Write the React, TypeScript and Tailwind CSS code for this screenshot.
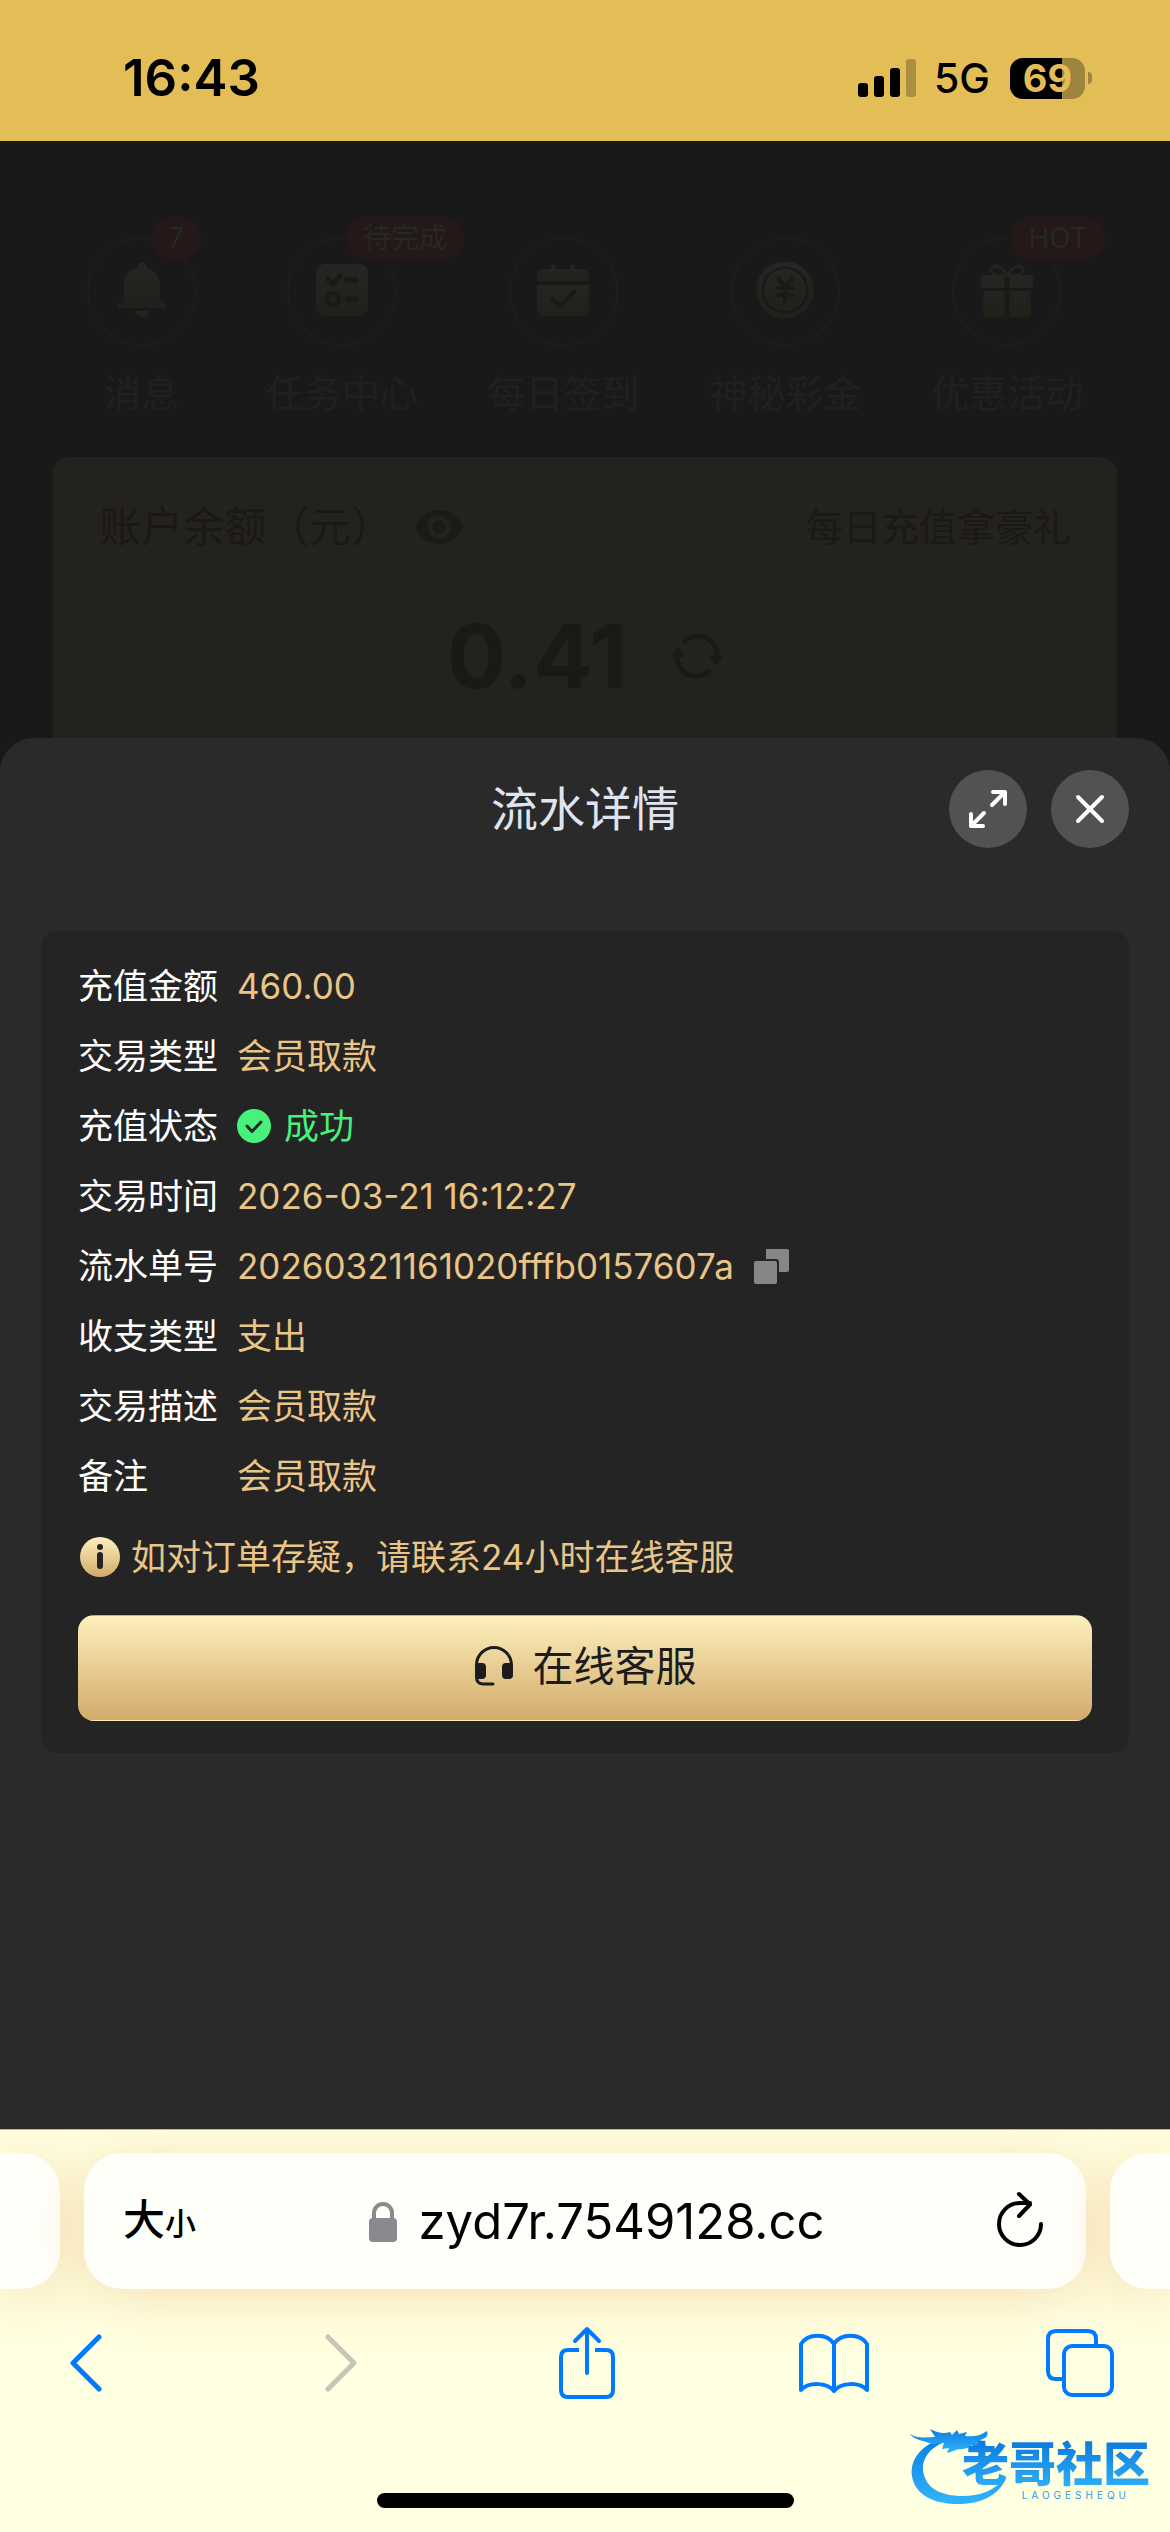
import React from 'react';

const SANS = "font-['Inter','Noto_Sans_CJK_SC',sans-serif]";

/* ---------- status bar ---------- */

function StatusBar() {
  return (
    <header className="flex h-[141px] shrink-0 items-end justify-between bg-[#e3be57] pr-[78px] pb-[38px] pl-[123px] text-black">
      <time className="text-[51px] leading-[50px] font-semibold">16:43</time>
      <div className="flex items-center">
        <svg className="h-[38px] w-[58px]" viewBox="0 0 58 38" aria-label="signal">
          <rect x="0" y="24" width="10" height="14" rx="3" />
          <rect x="16" y="17" width="10" height="21" rx="3" />
          <rect x="32" y="9" width="10" height="29" rx="3" />
          <rect x="48" y="0" width="10" height="38" rx="3" opacity="0.25" />
        </svg>
        <span className="ml-[18px] text-[41px] leading-[50px] font-medium">5G</span>
        <div className="relative ml-[20px] flex h-[41px] w-[75px] items-center justify-center rounded-[13px] bg-[#9e853d]">
          <div className="absolute inset-y-0 left-0 w-[69%] rounded-l-[13px] bg-black" />
          <span className="relative text-[38px] leading-[46px] font-bold text-[#e3be57]">69</span>
        </div>
        <div className="ml-[3px] h-[12px] w-[4px] rounded-r-full bg-[#9e853d]" />
      </div>
    </header>
  );
}

/* ---------- dimmed page behind the sheet ---------- */

function FadeDefs({ id }: { id: string }) {
  return (
    <defs>
      <linearGradient id={id} x1="0" y1="0" x2="0" y2="1">
        <stop offset="0" stopColor="#252523" />
        <stop offset="1" stopColor="#21201a" />
      </linearGradient>
    </defs>
  );
}

function BellIcon() {
  return (
    <svg className="size-[58px]" viewBox="0 0 58 58">
      <FadeDefs id="bell" />
      <g fill="url(#bell)">
        <path d="M29 1c2.300 0 4 1.800 4 4v1.500c8 1.800 14 8.500 14 17.500v13c0 4 2 5.500 6 6v4H5v-4c4-.500 6-2 6-6V24c0-9 6-15.700 14-17.500V5c0-2.200 1.700-4 4-4z" />
        <path d="M22.500 50h13c0 4-3 7-6.500 7s-6.500-3-6.500-7z" />
      </g>
    </svg>
  );
}

function TasksIcon() {
  return (
    <svg className="size-[58px]" viewBox="0 0 58 58">
      <FadeDefs id="tasks" />
      <rect x="3" y="3" width="52" height="52" rx="9" fill="url(#tasks)" />
      <g fill="none" stroke="#191919" strokeWidth="5" strokeLinecap="round" strokeLinejoin="round">
        <path d="M15 18l5 5 7-8M34 19h9M34 38h9" />
        <circle cx="20" cy="38" r="6" strokeWidth="4" />
      </g>
    </svg>
  );
}

function CalendarIcon() {
  return (
    <svg className="size-[58px]" viewBox="0 0 58 58">
      <FadeDefs id="calendar" />
      <g fill="url(#calendar)">
        <path d="M3 20v-5c0-4 3-7 7-7h7V6a2.200 2.200 0 014.500 0v2h15V6a2.200 2.200 0 014.500 0v2h7c4 0 7 3 7 7v5z" />
        <path d="M3 24h52v24c0 4-3 7-7 7H10c-4 0-7-3-7-7z" />
      </g>
      <path d="M18 38l8 7 14-14" fill="none" stroke="#191919" strokeWidth="4" strokeLinecap="round" strokeLinejoin="round" />
    </svg>
  );
}

function CoinIcon() {
  return (
    <svg className="size-[58px]" viewBox="0 0 58 58">
      <FadeDefs id="coin" />
      <circle cx="29" cy="29" r="26" fill="none" stroke="url(#coin)" strokeWidth="5" />
      <circle cx="29" cy="29" r="21" fill="url(#coin)" />
      <path d="M22 17l7 9 7-9M22 27h14M22 34h14M29 27v14" fill="none" stroke="#191919" strokeWidth="4" strokeLinecap="round" strokeLinejoin="round" />
    </svg>
  );
}

function GiftIcon() {
  return (
    <svg className="size-[58px]" viewBox="0 0 58 58">
      <FadeDefs id="gift" />
      <path d="M29 15C24 4 13 2 13 9c0 5 8 6 16 6zM29 15C34 4 45 2 45 9c0 5-8 6-16 6z" fill="none" stroke="#242320" strokeWidth="3" />
      <g fill="url(#gift)">
        <path d="M3 16a2 2 0 012-2h21.500v13H3zM31.500 14H53a2 2 0 012 2v11H31.500zM5.500 30h21v26h-19a2 2 0 01-2-2zM31.500 30h21v24a2 2 0 01-2 2h-19z" />
      </g>
    </svg>
  );
}

const shortcuts = [
  { label: '消息', icon: <BellIcon />, badge: '7', badgeLeft: 'left-[62px]' },
  { label: '任务中心', icon: <TasksIcon />, badge: '待完成', badgeLeft: 'left-[57px]' },
  { label: '每日签到', icon: <CalendarIcon /> },
  { label: '神秘彩金', icon: <CoinIcon /> },
  { label: '优惠活动', icon: <GiftIcon />, badge: 'HOT', badgeLeft: 'left-[57px]' },
];

function Shortcuts() {
  return (
    <nav className="flex justify-between px-[87px] pt-[96px]">
      {shortcuts.map((s) => (
        <a key={s.label} href="#" className="flex min-w-[109px] flex-col items-center gap-[23px]">
          <span className="relative flex size-[109px] items-center justify-center rounded-full border-2 border-[#1e1d1b] pb-[3px]">
            {s.icon}
            {s.badge && (
              <span
                className={`absolute -top-[23px] ${s.badgeLeft} h-[44px] rounded-full bg-[#241818] px-[17px] text-[28px] leading-[44px] whitespace-nowrap text-[#262727]`}
              >
                {s.badge}
              </span>
            )}
          </span>
          <span className="text-[38px] leading-[48px] text-[#202020]">{s.label}</span>
        </a>
      ))}
    </nav>
  );
}

function BalanceCard() {
  return (
    <section className="mx-[53px] mt-[40px] h-[320px] rounded-[16px] bg-[#24221e] px-[46px] pt-[40px] text-[#1a1917]">
      <div className="flex h-[60px] items-center justify-between">
        <div className="flex items-center">
          <span className="text-[42px] leading-[60px]">账户余额（元）</span>
          <svg className="ml-[22px] h-[34px] w-[48px]" viewBox="0 0 48 34">
            <path d="M24 0C13 0 4 7 0 17c4 10 13 17 24 17s20-7 24-17C44 7 35 0 24 0z" fill="#1a1a19" />
            <circle cx="24" cy="17" r="9" fill="none" stroke="#24221e" strokeWidth="5" />
          </svg>
        </div>
        <span className="text-[38px] leading-[60px]">每日充值拿豪礼</span>
      </div>
      <div className="mt-[50px] flex items-center justify-center gap-[44px]">
        <strong className="text-[88px] leading-[98px] font-bold">0.41</strong>
        <svg className="h-[44px] w-[52px]" viewBox="0 0 52 44">
          <g fill="none" stroke="#1a1917" strokeWidth="5" strokeLinecap="round">
            <path d="M14 7a19 19 0 0132 15" />
            <path d="M38 37A19 19 0 016 22" />
          </g>
          <path d="M38 21h14l-7 11zM0 23h14L7 12z" fill="#1a1917" />
        </svg>
      </div>
    </section>
  );
}

/* ---------- bottom sheet ---------- */

function CheckBadge() {
  return (
    <svg className="mr-[13px] size-[34px]" viewBox="0 0 34 34">
      <circle cx="17" cy="17" r="17" fill="#46f27c" />
      <path d="M10 17l5 5.500 9-9.500" fill="none" stroke="#242424" strokeWidth="3" strokeLinecap="round" strokeLinejoin="round" />
    </svg>
  );
}

function CopyIcon() {
  return (
    <svg className="size-[35px]" viewBox="0 0 35 35" fill="#868686">
      <path d="M13 0h20a2 2 0 012 2v19a2 2 0 01-2 2h-8V13a3 3 0 00-3-3H12V1a1 1 0 011-1z" />
      <rect x="0" y="12" width="23" height="23" rx="2" />
    </svg>
  );
}

type Row = { label: string; value: React.ReactNode; tone?: string; copy?: boolean };

const rows: Row[] = [
  { label: '充值金额', value: '460.00' },
  { label: '交易类型', value: '会员取款' },
  { label: '充值状态', value: <><CheckBadge />成功</>, tone: 'text-[#46f27c]' },
  { label: '交易时间', value: '2026-03-21 16:12:27' },
  { label: '流水单号', value: '20260321161020fffb0157607a', copy: true },
  { label: '收支类型', value: '支出' },
  { label: '交易描述', value: '会员取款' },
  { label: '备注', value: '会员取款' },
];

function DetailSheet() {
  return (
    <section role="dialog" aria-labelledby="sheet-title" className="relative -mt-[39px] flex-1 rounded-t-[34px] bg-[#2a2a2a] px-[41px] pt-[32px]">
      <div className="relative flex h-[78px] items-center justify-center">
        <h1 id="sheet-title" className="text-[47px] leading-[60px] text-[#dfe4ee]">流水详情</h1>
        <div className="absolute right-0 flex gap-[24px]">
          <button aria-label="展开" className="flex size-[78px] items-center justify-center rounded-full bg-[#525252]">
            <svg className="size-[40px]" viewBox="0 0 40 40" fill="none" stroke="#fff" strokeWidth="4" strokeLinecap="round" strokeLinejoin="round">
              <path d="M24 16L37 3M25 3h12v12M16 24L3 37M3 25v12h12" />
            </svg>
          </button>
          <button aria-label="关闭" className="flex size-[78px] items-center justify-center rounded-full bg-[#525252]">
            <svg className="size-[30px]" viewBox="0 0 30 30" fill="none" stroke="#fff" strokeWidth="4" strokeLinecap="round">
              <path d="M3 3l24 24M27 3L3 27" />
            </svg>
          </button>
        </div>
      </div>

      <div className="mt-[83px] rounded-[16px] bg-[#242424] px-[37px] pt-[20px] pb-[32px]">
        <dl>
          {rows.map((r) => (
            <div key={r.label} className="flex h-[70px] items-center text-[35px] leading-[50px]">
              <dt className="w-[159px] text-white">{r.label}</dt>
              <dd className={`flex items-center ${r.tone ?? 'text-[#e9c587]'}`}>
                {r.value}
                {r.copy && (
                  <button aria-label="复制" className="ml-[20px]">
                    <CopyIcon />
                  </button>
                )}
              </dd>
            </div>
          ))}
        </dl>
        <p className="mt-[21px] flex items-center text-[35px] leading-[50px] text-[#e9c587]">
          <svg className="mr-[11px] ml-[2px] size-[40px]" viewBox="0 0 40 40">
            <defs>
              <linearGradient id="info" x1="0" y1="0" x2="0" y2="1">
                <stop offset="0" stopColor="#fef0bd" />
                <stop offset="1" stopColor="#d1ab6a" />
              </linearGradient>
            </defs>
            <circle cx="20" cy="20" r="20" fill="url(#info)" />
            <circle cx="20" cy="10" r="3" fill="#242424" />
            <path d="M20 18v11" stroke="#242424" strokeWidth="6" strokeLinecap="round" />
          </svg>
          如对订单存疑，请联系24小时在线客服
        </p>
        <button className="mt-[33px] flex h-[106px] w-full items-center justify-center gap-[19px] rounded-[16px] border border-transparent bg-linear-to-b from-[#fef0bd] to-[#d1ab6a] pb-[4px] text-[41px] leading-[60px] text-[#1c1c1c]">
          <svg className="size-[40px]" viewBox="0 0 40 40">
            <path d="M2.500 20v-1a17.500 17.500 0 0135 0v6M2.500 20v11q0 7 7 7H19" fill="none" stroke="#1c1c1c" strokeWidth="3" strokeLinecap="round" />
            <rect x="1" y="17" width="11" height="16" rx="4" fill="#1c1c1c" />
            <rect x="28" y="17" width="11" height="16" rx="4" fill="#1c1c1c" />
          </svg>
          在线客服
        </button>
      </div>
    </section>
  );
}

/* ---------- browser chrome ---------- */

function DragonMark() {
  return (
    <div className="absolute right-[20px] bottom-[26px] flex items-end" aria-label="老哥社区">
      <svg className="-mr-[46px] h-[84px] w-[98px]" viewBox="0 0 98 84">
        <defs>
          <linearGradient id="dragon" x1="0" y1="0" x2="0" y2="1">
            <stop offset="0" stopColor="#0a7fe6" />
            <stop offset="1" stopColor="#32b4fb" />
          </linearGradient>
        </defs>
        <g fill="url(#dragon)">
          <path d="M28 18C8 26 0 40 2 54c3 20 24 29 50 28 20-1 38-9 45-28-12 15-28 20-44 20C30 74 15 66 13 48 12 36 20 26 34 20z" />
          <path d="M0 12c8 5 16 3 25 3L20 7c8 4 14 5 20 3l2 3 5-5 2 4 8-2-2 4c8 1 15 0 22-5 2 6-3 8-7 9l6 5c-5 2-9 0-13-1-3 4-8 5-12 5-6 0-8 3-14 4l2-5-7 1 2-6-12 1C12 18 4 18 0 12z" />
          <path d="M62 22l14 1c-2 5-8 5-13 4z" />
        </g>
      </svg>
      <div className="relative flex flex-col items-end pb-[5px]">
        <span className="bg-linear-to-b from-[#0a78dd] to-[#2fb0fa] bg-clip-text text-[47px] leading-[50px] font-black text-transparent">
          老哥社区
        </span>
        <span className="mr-[20px] text-[10px] leading-[12px] tracking-[4px] text-[#2f9be6]">LAOGESHEQU</span>
      </div>
    </div>
  );
}

function BrowserBar() {
  const pill = 'h-[136px] bg-[#fffffa] shadow-[0_8px_56px_rgba(224,150,80,0.3)]';
  const tool = 'flex w-[50px] items-center justify-center';
  return (
    <footer className="relative shrink-0 overflow-hidden border-t border-[#b9b3a8] bg-[#ffffe1] pt-[23px] pb-[24px]">
      <div className="flex gap-[24px]">
        <div className={`${pill} w-[60px] rounded-r-[38px]`} />
        <div className={`${pill} flex flex-1 items-center justify-between rounded-[38px] pt-[2px] pr-[43px] pl-[39px] text-black`}>
          <button aria-label="大小" className="flex items-baseline font-medium">
            <span className="text-[42px] leading-[60px]">大</span>
            <span className="text-[31px] leading-[60px]">小</span>
          </button>
          <div className="flex items-center gap-[22px]">
            <svg className="h-[40px] w-[28px]" viewBox="0 0 28 40">
              <rect x="0" y="16" width="28" height="24" rx="4" fill="#8a8a8e" />
              <path d="M5 17v-6a9 9 0 0118 0v6" fill="none" stroke="#8a8a8e" strokeWidth="4" />
            </svg>
            <span className="text-[49px] leading-[60px]">zyd7r.7549128.cc</span>
          </div>
          <button aria-label="重新载入" className="pb-[6px]">
            <svg className="h-[56px] w-[46px]" viewBox="0 0 46 56" fill="none" stroke="#000" strokeWidth="4" strokeLinecap="round" strokeLinejoin="round">
              <path d="M44 33a21 21 0 11-21-21h10M22 3l11 10.500L22 25" />
            </svg>
          </button>
        </div>
        <div className={`${pill} w-[60px] rounded-l-[38px]`} />
      </div>

      <div className="relative mt-[34px] flex h-[80px] items-center justify-between pr-[65px] pl-[69px]">
        <button aria-label="后退" className="flex w-[50px] items-center justify-start">
          <svg className="h-[58px] w-[34px] shrink-0" viewBox="0 0 34 58" fill="none" stroke="#007aff" strokeWidth="5" strokeLinecap="round" strokeLinejoin="round">
            <path d="M30 3L4 29l26 26" />
          </svg>
        </button>
        <button aria-label="前进" disabled className={tool}>
          <svg className="h-[58px] w-[34px] shrink-0" viewBox="0 0 34 58" fill="none" stroke="#cac3b6" strokeWidth="5" strokeLinecap="round" strokeLinejoin="round">
            <path d="M4 3l26 26L4 55" />
          </svg>
        </button>
        <button aria-label="共享" className={tool}>
          <svg className="h-[74px] w-[58px] shrink-0" viewBox="0 0 58 74" fill="none" stroke="#007aff" strokeWidth="4" strokeLinecap="round" strokeLinejoin="round">
            <path d="M29 47V3M17 15L29 3l12 12" />
            <path strokeLinecap="butt" d="M21 24H10q-7 0-7 7v33q0 7 7 7h38q7 0 7-7V31q0-7-7-7H37" />
          </svg>
        </button>
        <button aria-label="书签" className={tool}>
          <svg className="h-[62px] w-[72px] shrink-0" viewBox="0 0 72 62" fill="none" stroke="#007aff" strokeWidth="4" strokeLinecap="round" strokeLinejoin="round">
            <path d="M36 12C29 1 10 1 3 12v46c7-8 26-8 33 1 7-9 26-9 33-1V12C62 1 43 1 36 12zv47" />
          </svg>
        </button>
        <button aria-label="标签页" className={tool}>
          <svg className="h-[68px] w-[68px] shrink-0" viewBox="0 0 68 68" fill="none" stroke="#007aff" strokeWidth="4">
            <rect x="18" y="17" width="48" height="49" rx="8" />
            <path d="M50 16v-6q0-8-8-8H10q-8 0-8 8v32q0 8 8 8h7" />
          </svg>
        </button>
      </div>

      <div className="mx-auto mt-[90px] h-[15px] w-[417px] rounded-full bg-black" />
      <DragonMark />
    </footer>
  );
}

export default function App() {
  return (
    <div className={`flex min-h-screen flex-col bg-[#191919] ${SANS}`}>
      <StatusBar />
      <Shortcuts />
      <BalanceCard />
      <DetailSheet />
      <BrowserBar />
    </div>
  );
}
